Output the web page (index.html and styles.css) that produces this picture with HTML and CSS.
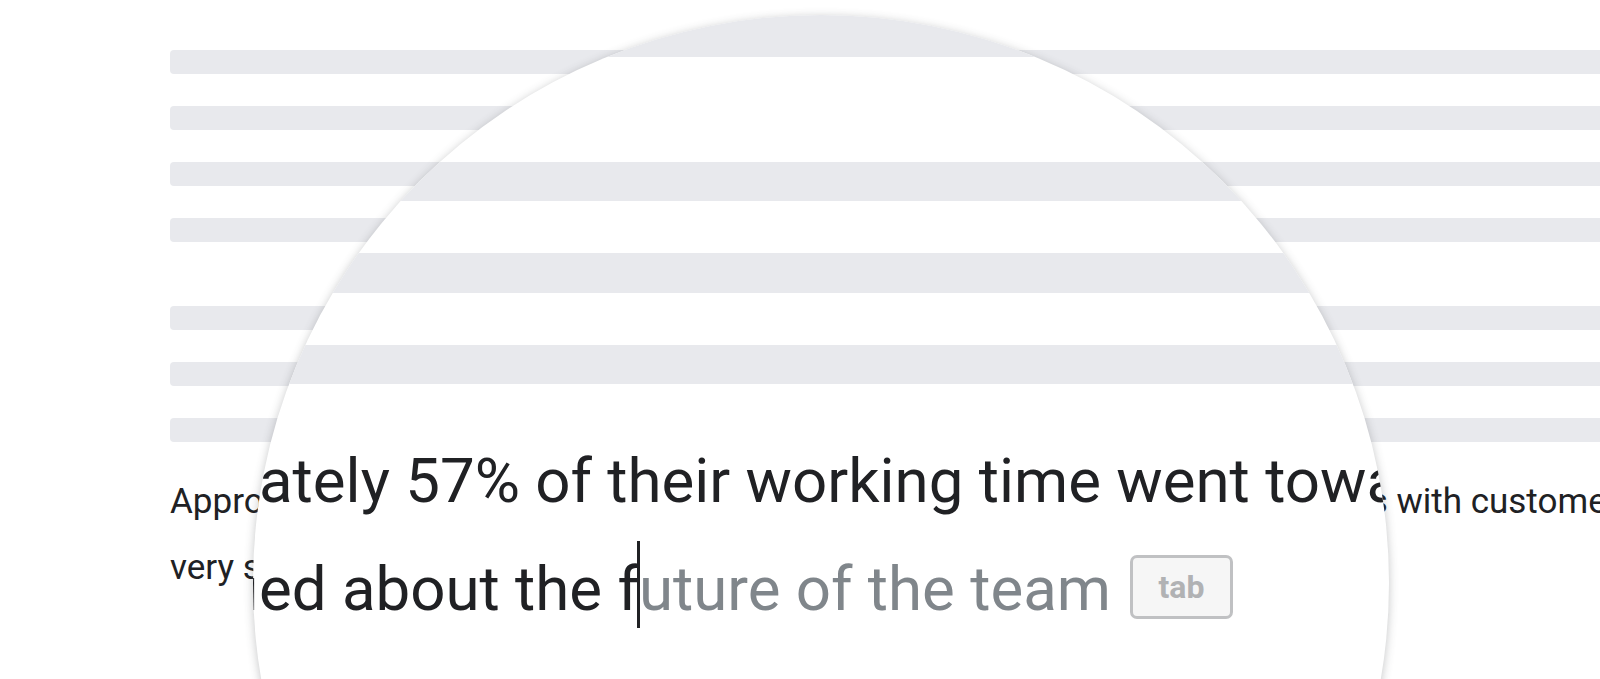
FILE: index.html
```html
<!DOCTYPE html>
<html lang="en">
<head>
<meta charset="utf-8">
<title>Smart Compose</title>
<link rel="stylesheet" href="styles.css">
</head>
<body>
<div class="stage">
  <div class="doc">
    <div class="para">
      <div class="bar"></div>
      <div class="bar"></div>
      <div class="bar"></div>
      <div class="bar"></div>
    </div>
    <div class="para">
      <div class="bar"></div>
      <div class="bar"></div>
      <div class="bar"></div>
    </div>
    <div class="text">
      <div class="line">Approximately 57% of their working time went towards improving relationships with customers, and most of them were</div>
      <div class="line">very satisfied about the future of the team</div>
    </div>
  </div>

  <div class="lens">
    <div class="lens-doc">
      <div class="lbar first"></div>
      <div class="lbar"></div>
      <div class="lbar"></div>
      <div class="lbar"></div>
      <div class="ltext">
        <div class="lline"><span class="pre">Approxim</span>ately 57% of their working time went towards improving</div>
        <div class="lline"><span class="pre">very satisfi</span>ed about the f<span class="caret"></span><span class="suggest">uture of the team</span><span class="key">tab</span></div>
      </div>
    </div>
  </div>
</div>
</body>
</html>
```

FILE: styles.css
```css
html, body {
  margin: 0;
  padding: 0;
  background: #ffffff;
}

body {
  width: 1600px;
  height: 679px;
  overflow: hidden;
  font-family: Roboto, "Liberation Sans", Arial, sans-serif;
  color: #202124;
}

.stage {
  position: relative;
  width: 1600px;
  height: 679px;
  overflow: hidden;
}

/* ---------- page underneath ---------- */
.doc {
  padding: 50px 0 0 170px;
}

.para {
  display: flex;
  flex-direction: column;
  gap: 32px;
  margin-bottom: 64px;
}

.para + .para {
  margin-bottom: 27px;
}

.bar {
  height: 24px;
  margin-right: -12px;
  background: #e8e9ed;
  border-radius: 4px;
}

.text {
  font-size: 35px;
  line-height: 66px;
  white-space: nowrap;
}

/* ---------- magnifier ---------- */
.lens {
  position: absolute;
  left: 253px;
  top: 15px;
  width: 1136px;
  height: 1136px;
  border-radius: 50%;
  overflow: hidden;
  background: #ffffff;
  box-shadow: 0 2px 10px rgba(60, 64, 67, 0.3);
}

.lens-doc {
  display: flex;
  flex-direction: column;
}

.lbar {
  flex: none;
  height: 39.4px;
  margin-top: 52.1px;
  background: #e8e9ed;
}

.lbar.first {
  height: 42px;
  margin-top: 0;
  margin-bottom: 52.9px;
}

.ltext {
  margin-top: 42.4px;
  padding-left: 6px;
  font-size: 61.8px;
  line-height: 108px;
  white-space: nowrap;
  color: #202124;
}

.pre {
  display: inline-block;
  width: 0;
  direction: rtl;
  white-space: nowrap;
}

.caret {
  display: inline-block;
  width: 3px;
  height: 87px;
  margin: 0 -1.5px;
  vertical-align: -18px;
  background: #202124;
}

.suggest {
  color: #80868b;
}

.key {
  display: inline-block;
  box-sizing: border-box;
  width: 103px;
  height: 64px;
  margin-left: 19px;
  border: 3px solid #c0c1c3;
  border-radius: 7px;
  background: #f6f6f6;
  color: #b1b2b4;
  font-size: 32px;
  font-weight: 700;
  line-height: 58px;
  text-align: center;
  vertical-align: 12px;
}
```
